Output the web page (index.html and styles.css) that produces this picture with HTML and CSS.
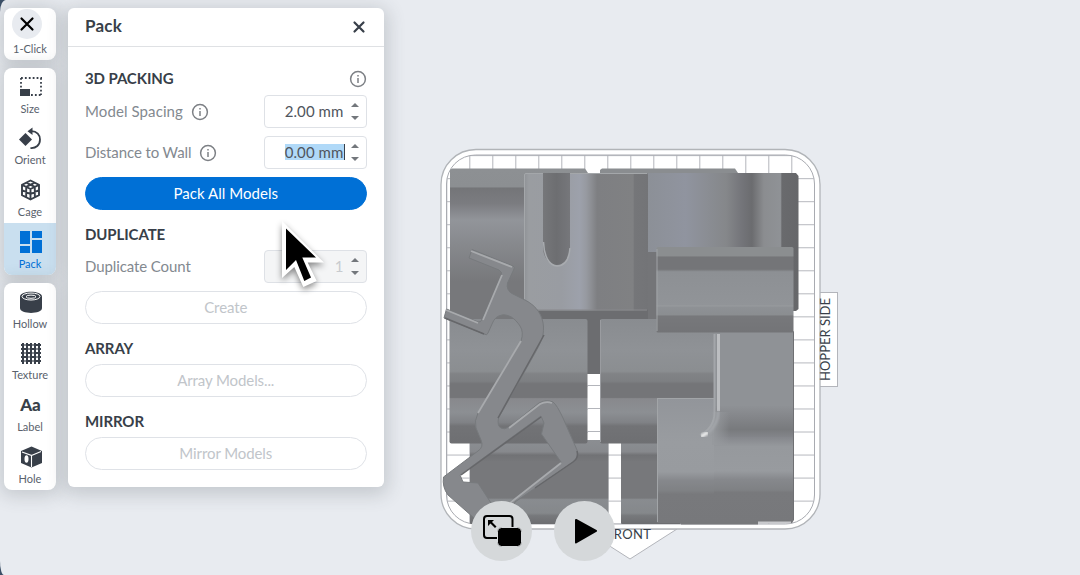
FILE: index.html
```html
<!DOCTYPE html>
<html lang="en">
<head>
    <meta charset="utf-8">
    <title>Pack</title>
    <link rel="stylesheet" href="styles.css">
</head>
<body>
<svg class="scene" width="1080" height="575" viewBox="0 0 1080 575">
    <defs>
        <pattern id="grid" x="446.3" y="178.2" width="23" height="23.03" patternUnits="userSpaceOnUse">
            <path d="M0 .5H23M.5 0V23.03" stroke="#b3b5bb" fill="none"/>
        </pattern>
        <linearGradient id="block" x2="0" y2="1">
            <stop offset="0" stop-color="#8d9093"/><stop offset=".12" stop-color="#8c8f92"/>
            <stop offset=".13" stop-color="#747578"/><stop offset=".23" stop-color="#7b7c80"/>
            <stop offset=".34" stop-color="#92959a"/><stop offset=".5" stop-color="#87898d"/>
            <stop offset=".75" stop-color="#77787b"/><stop offset="1" stop-color="#77787b"/>
        </linearGradient>
        <linearGradient id="mid" x2="0" y2="1">
            <stop offset="0" stop-color="#898c90"/><stop offset=".25" stop-color="#8f9296"/>
            <stop offset=".42" stop-color="#8b8e91"/><stop offset=".44" stop-color="#818386"/>
            <stop offset=".5" stop-color="#7d7f82"/><stop offset=".52" stop-color="#747578"/>
            <stop offset=".63" stop-color="#747578"/><stop offset=".64" stop-color="#88898d"/>
            <stop offset=".75" stop-color="#8c8f93"/><stop offset=".83" stop-color="#808286"/>
            <stop offset=".86" stop-color="#727376"/><stop offset="1" stop-color="#6e6f72"/>
        </linearGradient>
        <linearGradient id="low" x2="0" y2="1">
            <stop offset="0" stop-color="#8b8e92"/><stop offset=".14" stop-color="#87898d"/>
            <stop offset=".18" stop-color="#717275"/><stop offset=".26" stop-color="#77787b"/>
            <stop offset=".69" stop-color="#77787b"/><stop offset=".71" stop-color="#898c90"/>
            <stop offset=".87" stop-color="#85888b"/><stop offset=".9" stop-color="#77797c"/>
            <stop offset="1" stop-color="#6c6d70"/>
        </linearGradient>
        <linearGradient id="slotted">
            <stop offset="0" stop-color="#8f9296"/><stop offset=".04" stop-color="#9a9da1"/>
            <stop offset=".3" stop-color="#999ca2"/><stop offset=".45" stop-color="#9da1ab"/>
            <stop offset=".5" stop-color="#979aa1"/><stop offset=".54" stop-color="#8d8f94"/>
            <stop offset=".59" stop-color="#7e7f82"/><stop offset=".88" stop-color="#808183"/>
            <stop offset=".89" stop-color="#757679"/><stop offset="1" stop-color="#737477"/>
        </linearGradient>
        <linearGradient id="slot">
            <stop offset="0" stop-color="#76777a"/><stop offset=".5" stop-color="#6d6e71"/>
            <stop offset="1" stop-color="#76777b"/>
        </linearGradient>
        <linearGradient id="curved">
            <stop offset="0" stop-color="#8c9097"/><stop offset=".25" stop-color="#90949f"/>
            <stop offset=".4" stop-color="#8a8d93"/><stop offset=".52" stop-color="#85878a"/>
            <stop offset=".62" stop-color="#74757a"/><stop offset=".69" stop-color="#6b6c6f"/>
            <stop offset=".77" stop-color="#8b8d90"/><stop offset=".88" stop-color="#8f9296"/>
            <stop offset=".89" stop-color="#696a6d"/><stop offset="1" stop-color="#66676a"/>
        </linearGradient>
        <linearGradient id="bar" x2="0" y2="1">
            <stop offset="0" stop-color="#8b8e90"/><stop offset=".1" stop-color="#8b8e90"/>
            <stop offset=".12" stop-color="#747578"/><stop offset=".26" stop-color="#747578"/>
            <stop offset=".29" stop-color="#8d9094"/><stop offset=".68" stop-color="#919498"/>
            <stop offset=".69" stop-color="#9a9da0"/><stop offset=".7" stop-color="#8e9195"/>
            <stop offset=".79" stop-color="#8b8e91"/><stop offset=".81" stop-color="#77787b"/>
            <stop offset="1" stop-color="#737477"/>
        </linearGradient>
        <linearGradient id="upright" x2="0" y2="1">
            <stop offset="0" stop-color="#8f9296"/><stop offset=".7" stop-color="#8f9296"/>
            <stop offset=".8" stop-color="#85878b"/><stop offset=".93" stop-color="#787a7d"/>
            <stop offset="1" stop-color="#83858a"/>
        </linearGradient>
        <linearGradient id="base" x2="0" y2="1">
            <stop offset="0" stop-color="#83858a"/><stop offset=".12" stop-color="#96999d"/>
            <stop offset=".4" stop-color="#989b9f"/><stop offset=".5" stop-color="#86888c"/>
            <stop offset=".62" stop-color="#7f8184"/><stop offset=".65" stop-color="#78797c"/>
            <stop offset="1" stop-color="#77787b"/>
        </linearGradient>
        <linearGradient id="foot" x2="0" y2="1">
            <stop offset="0" stop-color="#92959a"/><stop offset=".35" stop-color="#999ca0"/>
            <stop offset=".59" stop-color="#989b9f"/><stop offset=".66" stop-color="#86888c"/>
            <stop offset=".74" stop-color="#7f8184"/><stop offset=".77" stop-color="#78797c"/>
            <stop offset="1" stop-color="#77787b"/>
        </linearGradient>
        <linearGradient id="fade">
            <stop offset="0" stop-color="#96999d"/><stop offset="1" stop-color="#96999d" stop-opacity="0"/>
        </linearGradient>
        <filter id="soft"><feGaussianBlur stdDeviation="1"/></filter>
    </defs>

    <!-- build plate -->
    <path d="M583 529H677L630 559Z" class="tag"/>
    <rect x="815" y="292.5" width="22.5" height="94" class="tag"/>
    <rect x="441" y="149.5" width="379" height="379.5" rx="35" class="rim"/>
    <rect x="446.5" y="155" width="368" height="369" rx="29" fill="url(#grid)" stroke="#a9abb1"/>
    <text x="606" y="539" class="side" textLength="45">FRONT</text>
    <text transform="translate(830 381) rotate(-90)" class="side" textLength="83">HOPPER SIDE</text>

    <!-- rear blocks -->
    <path d="M452 168.500H585L588 173V320H450V170Z" fill="url(#block)"/>
    <path d="M602 168.500H735L738 173V320H600V170Z" fill="#8a8d90"/>
    <path d="M524 309H657V320H600V374H587V320H524Z" fill="#6c6d70"/>
    <rect x="470" y="440" width="138.500" height="84" rx="1" fill="url(#low)"/>
    <rect x="621" y="440" width="60" height="84" rx="1" fill="url(#low)"/>
    <path d="M600 374V439H588V374Z" fill="#fff"/>
    <path d="M588 385.500H600M588 408.500H600M588 431.500H600" stroke="#b3b5bb"/>
    <rect x="449.500" y="319" width="138" height="124.500" rx="2" fill="url(#mid)"/>
    <rect x="600" y="319" width="122" height="124.500" rx="2" fill="url(#mid)"/>
    <path d="M600.500 320V442" stroke="#9a9ca0"/>

    <!-- slotted block and curved block -->
    <path d="M648 173H796L798.500 176V309L796 311H648Z" fill="url(#curved)"/>
    <rect x="648" y="252" width="12" height="67" fill="#747578"/>
    <rect x="524" y="173" width="124" height="137.500" rx="2" fill="url(#slotted)"/>
    <path d="M524.500 309V175Q524.500 173.500 526 173.500H647" fill="none" stroke="#a4a7aa"/>
    <path d="M525 310H647" stroke="#88898c"/>
    <path d="M543 173H570V247C570 258 564 265 557 265C549 265 543 257 543 247Z" fill="url(#slot)"/>
    <path d="M543.500 242C544 256 549 265.500 557 266C564 266 569 260 570 248" fill="none" stroke="#a8abaf" stroke-width="1.500"/>

    <!-- L block -->
    <rect x="657" y="398" width="60" height="125" fill="url(#foot)"/>
    <path d="M714 436H794V520L792 523H714Z" fill="url(#base)"/>
    <rect x="714" y="331" width="80" height="106" fill="url(#upright)"/>
    <rect x="712" y="412" width="18" height="33" fill="url(#fade)"/>
    <path d="M714.500 334V412Q714.500 428 700 435" fill="none" stroke="#a3a6aa" stroke-width="2"/>
    <path d="M718.500 334V411" stroke="#bcbec1" stroke-width="3"/>
    <path d="M718.500 411Q718 424 708 433" fill="none" stroke="#a3a6aa" stroke-width="3" filter="url(#soft)"/>
    <path d="M702 436L707 433" stroke="#eceded" stroke-width="3.500" stroke-linecap="round" filter="url(#soft)"/>
    <path d="M657.500 398V522M657 398.500H714" stroke="#a2a5a8"/>
    <path d="M793.500 332V520" stroke="#6f7073"/>
    <path d="M758 522.500H791" stroke="#c9cacd" stroke-width="2"/>
    <path d="M681 523.500H758" stroke="#77787b" stroke-width="2"/>
    <rect x="656.500" y="247" width="137" height="85.500" rx="1.500" fill="url(#bar)"/>
    <path d="M657 249V331" stroke="#a0a3a6"/>

    <!-- bracket -->
    <path class="bracket" fill-rule="evenodd" d="M472 249.500L513 266Q515 267 514 269L507.500 283Q506 290 512 293.500L525 300C537 306 543 316 543.500 327C544 337 540 344 535 353L498.500 418Q497 426 501 428Q504 430 509 427L539 403Q546 399 553 402Q557 405 563 418L577 450Q579 458 573 462L515 502L510 518H474L448 495Q442 487 443.500 477L478 451Q484 447 481 440L476 428Q474 421 478 413L521 341Q524 332 520 326C515 318 508 314 502 315Q495 316 492 324L488 333Q487 336 484 334L444 318L446.500 309L477 321.500Q481 323 482 319L501 276Q503 272 499 270L469 258ZM541 416L460 475L463 482L478 483L491 503H509L561 462L541.500 434L544 423Z"/>
    <path d="M471 251L512 267M446 310L478 323M483 320L502 275M509 428L540 404Q546 401 552 403M521 341L478 413M510 503L561 463" class="shine"/>
    <path d="M544 335L498 418M577 451Q579 458 573 462L535 488M541 417L461 475M484 334L445 318" class="shade"/>
</svg>

<div class="toolbar">
    <ul class="tools">
        <li class="tool one-click">
            <span class="dismiss"><svg width="16" height="16" viewBox="0 0 16 16"><path d="M2.500 2.500L13.500 13.500M13.500 2.500L2.500 13.500" stroke="#000" stroke-width="2.200" stroke-linecap="round"/></svg></span>
            1-Click
        </li>
    </ul>
    <ul class="tools">
        <li class="tool">
            <svg width="24" height="24" viewBox="0 0 24 24"><path d="M2 3H23M2 3V15M22 3V20M12 20H23" fill="none" stroke="#383f49" stroke-width="1.800" stroke-dasharray="1.800 2.100"/><path d="M1 14H11V21H1Z"/></svg>
            Size
        </li>
        <li class="tool">
            <svg width="24" height="24" viewBox="0 0 24 24"><path d="M6.500 7L13 13.500L6.500 20L0 13.500Z"/><path d="M12 5.200C18 5 21 9 21 13.500C21 19 17 22.500 11.500 22" fill="none" stroke="#383f49" stroke-width="1.800"/><path d="M8.500 5.200L13.500 1.500V9Z"/></svg>
            Orient
        </li>
        <li class="tool">
            <svg width="24" height="24" viewBox="0 0 24 24"><path d="M11.500 2.500L20 6.800V17.200L11.500 21.500L3 17.200V6.800ZM3 6.800L11.500 11L20 6.800M11.500 11V21.500M3 12L11.500 16.200L20 12M7.300 4.600L15.800 8.900V19.400M15.800 4.600L7.200 8.900V19.400" fill="none" stroke="#383f49" stroke-width="1.900" stroke-linejoin="round"/></svg>
            Cage
        </li>
        <li class="tool active">
            <svg width="24" height="24" viewBox="0 0 24 24"><path d="M1 1H11V14H1ZM13 1H23V8H13ZM1 16H11V23H1ZM13 10H23V23H13Z"/></svg>
            Pack
        </li>
    </ul>
    <ul class="tools">
        <li class="tool">
            <svg width="24" height="24" viewBox="0 0 24 24"><path d="M1 6.500C1 0 23 0 23 6.500V18C23 24.500 1 24.500 1 18Z"/><ellipse cx="12" cy="6.500" rx="9" ry="3.500" fill="none" stroke="#fff"/><ellipse cx="12" cy="6.700" rx="5" ry="1.600" fill="none" stroke="#fff"/></svg>
            Hollow
        </li>
        <li class="tool">
            <svg width="24" height="24" viewBox="0 0 24 24"><path d="M4 2V23M8 2V23M12 2V23M16 2V23M20 2V23M2 4H22M2 8H22M2 12H22M2 16H22M2 20H22" stroke="#383f49" stroke-width="2"/><path d="M6 3V5M14 3V5M10 7V9M18 7V9M6 11V13M14 11V13M10 15V17M18 15V17M6 19V21M14 19V21" stroke="#fff" stroke-width=".8"/></svg>
            Texture
        </li>
        <li class="tool">
            <span class="glyph">Aa</span>
            Label
        </li>
        <li class="tool">
            <svg width="24" height="24" viewBox="0 0 24 24"><path d="M12.500 1.500L23 6V18L12.500 22.500L2 18V6Z"/><path d="M3 7L12.500 10.500V22M12.500 10.500L22 6.500" fill="none" stroke="#fff" stroke-width="1.100"/><ellipse cx="7.500" cy="14" rx="2" ry="3.700" fill="#fff"/></svg>
            Hole
        </li>
    </ul>
</div>

<div class="panel">
    <div class="panel-header">
        <h1>Pack</h1>
        <svg class="close" width="14" height="14" viewBox="0 0 14 14"><path d="M2.500 2.500L11.500 11.500M11.500 2.500L2.500 11.500" stroke="#383f49" stroke-width="2.200" stroke-linecap="round"/></svg>
    </div>
    <div class="panel-body">
        <div class="row title-row">
            <h2>3D PACKING</h2>
            <svg class="info" width="18" height="18" viewBox="0 0 18 18"><circle cx="9" cy="9" r="7.400"/><path d="M9 8V13M9 5V6.500"/></svg>
        </div>
        <div class="row field">
            <label class="spacing">Model Spacing</label>
            <svg class="info" width="18" height="18" viewBox="0 0 18 18"><circle cx="9" cy="9" r="7.400"/><path d="M9 8V13M9 5V6.500"/></svg>
            <div class="number"><span class="value">2.00 mm</span><span class="spin"></span></div>
        </div>
        <div class="row field">
            <label>Distance to Wall</label>
            <svg class="info" width="18" height="18" viewBox="0 0 18 18"><circle cx="9" cy="9" r="7.400"/><path d="M9 8V13M9 5V6.500"/></svg>
            <div class="number"><span class="value selected">0.00 mm</span><span class="spin"></span></div>
        </div>
        <button class="btn primary">Pack All Models</button>
        <h2>DUPLICATE</h2>
        <div class="row field">
            <label>Duplicate Count</label>
            <div class="number disabled"><span class="value">1</span><span class="spin"></span></div>
        </div>
        <button class="btn">Create</button>
        <h2>ARRAY</h2>
        <button class="btn">Array Models...</button>
        <h2>MIRROR</h2>
        <button class="btn">Mirror Models</button>
    </div>
</div>

<div class="player">
    <span class="round">
        <svg width="40" height="34" viewBox="0 0 40 34"><rect x="2" y="2" width="28.500" height="22" rx="3" fill="none" stroke="#000" stroke-width="2"/><path d="M6 6H12L10 8L14.500 12.500L13 14L8.500 9.500L6 12Z"/><rect x="15.500" y="13.500" width="24" height="19" rx="4" stroke="#d5d8da"/></svg>
    </span>
    <span class="round">
        <svg width="40" height="34" viewBox="0 0 40 34"><path d="M11 6L31 17L11 28.500Z" stroke="#000" stroke-width="2" stroke-linejoin="round"/></svg>
    </span>
</div>

<svg class="cursor" width="50" height="72" viewBox="0 0 50 72"><path d="M3 1V58L15.300 47L24.300 67L37.700 61L28.700 42.500H45Z" fill="#fff"/><path d="M7 8.500V50L17 40L25.300 61L32 57.500L23.300 37.500H37Z"/></svg>
</body>
</html>
```

FILE: styles.css
```css
html {
    background: #3b4f66;
}

body {
    position: relative;
    display: flex;
    align-items: flex-start;
    gap: 12px;
    box-sizing: border-box;
    width: 1080px;
    height: 575px;
    margin: 0;
    padding: 8px 0 0 4px;
    overflow: hidden;
    background: #e8ebf0;
    border-radius: 6px 0 0 4px / 12px 0 0 14px;
    color: #383f49;
    font-family: Lato, "Liberation Sans", sans-serif;
    font-size: 15px;
}

.scene {
    position: absolute;
    top: 0;
    left: 0;
}

.tag {
    fill: #fff;
    stroke: #b3b5bb;
}

.rim {
    fill: #fff;
    stroke: #b1b4b8;
    stroke-width: 1.3;
}

.side {
    fill: #383f49;
    font-size: 13px;
}

.bracket {
    fill: #86888c;
    stroke: #777a7d;
}

.shine {
    fill: none;
    stroke: #a8aaad;
    stroke-width: 1.8;
}

.shade {
    fill: none;
    stroke: #66676a;
    stroke-width: 1.5;
}

.toolbar {
    position: relative;
    display: flex;
    flex-direction: column;
    gap: 8px;
    width: 52px;
}

.tools {
    margin: 0;
    padding: 0;
    list-style: none;
    background: #fff;
    border-radius: 8px;
    box-shadow: 0 2px 18px 4px rgba(60, 70, 75, .2);
}

.tool {
    display: flex;
    flex-direction: column;
    align-items: center;
    gap: 3px;
    box-sizing: border-box;
    height: 51.8px;
    padding-top: 7px;
    color: #59616c;
    font-size: 11px;
    line-height: 14px;
}

.tool svg {
    margin-left: 1px;
    fill: #383f49;
}

.tool.active {
    color: #0070d6;
    background: #c9dfef;
    border-radius: 0 0 8px 8px;
}

.tool.active svg {
    fill: #0070d6;
}

.one-click {
    height: 51.5px;
    padding-top: 1px;
}

.dismiss {
    display: flex;
    align-items: center;
    justify-content: center;
    width: 30px;
    height: 30px;
    margin-right: 6px;
    border-radius: 50%;
    background: #e8ebf0;
}

.dismiss svg {
    margin: 0;
}

.glyph {
    height: 24px;
    padding-left: 1px;
    color: #383f49;
    font-size: 17px;
    font-weight: 900;
    line-height: 23px;
}

.panel {
    position: relative;
    width: 316px;
    height: 479px;
    background: #fff;
    border-radius: 6px;
    box-shadow: 0 4px 18px 4px rgba(60, 70, 75, .2);
}

.panel-header {
    display: flex;
    align-items: center;
    justify-content: space-between;
    box-sizing: border-box;
    height: 39px;
    padding: 0 18px 1px 17px;
    border-bottom: 1px solid #dfe1e4;
}

h1 {
    margin: 0;
    padding-bottom: 2px;
    font-size: 17px;
    letter-spacing: .2px;
}

.panel-body {
    display: flex;
    flex-direction: column;
    padding: 22px 17.5px 0 17px;
}

h2 {
    margin: 0 0 6px;
    font-size: 15px;
    line-height: 20px;
    letter-spacing: -.1px;
}

.row {
    display: flex;
    align-items: center;
}

.title-row {
    justify-content: space-between;
    height: 20px;
    margin-bottom: 6px;
}

.title-row h2 {
    margin: 0;
    padding-bottom: 2px;
}

.field {
    height: 33px;
    margin-bottom: 8px;
    color: #838990;
    letter-spacing: -.1px;
}

.field label {
    padding-bottom: 2px;
}

.field .spacing {
    letter-spacing: .1px;
}

.field .info {
    margin-left: 8px;
}

.info {
    fill: none;
    stroke: #7d8085;
    stroke-width: 1.5;
}

.number {
    display: flex;
    align-items: center;
    justify-content: flex-end;
    gap: 7px;
    box-sizing: border-box;
    width: 103px;
    height: 33px;
    margin-left: auto;
    padding: 0 7px 1px 0;
    border: 1px solid #dee1e6;
    border-radius: 4px;
    color: #50555d;
    letter-spacing: .1px;
}

.value {
    line-height: 16px;
}

.selected {
    background: #b0d9f8;
    box-shadow: 1px 0 #383f49;
}

.spin {
    display: flex;
    flex-direction: column;
    gap: 9px;
}

.spin:before, .spin:after {
    content: "";
    border: 4px solid transparent;
    border-top: 0;
    border-bottom: 4px solid #73777c;
}

.spin:after {
    border-top: 4px solid #73777c;
    border-bottom: 0;
}

.number.disabled {
    background: #f4f5f6;
    color: #c8cbcf;
}

.btn {
    height: 33px;
    margin: 0 0 14px;
    padding: 0 0 2px;
    border: 1px solid #dfe2e7;
    border-radius: 17px;
    background: #fff;
    color: #c1c5ca;
    font: inherit;
    letter-spacing: -.1px;
}

.btn.primary {
    border-color: #0070d6;
    background: #0070d6;
    color: #fff;
    letter-spacing: .05px;
}

.player {
    position: absolute;
    top: 501px;
    left: 471px;
    display: flex;
    gap: 22px;
}

.round {
    display: flex;
    align-items: center;
    justify-content: center;
    width: 61px;
    height: 60px;
    border-radius: 50%;
    background: #d5d8da;
}

.cursor {
    position: absolute;
    top: 220px;
    left: 279px;
    filter: drop-shadow(0 3px 3px rgba(0, 0, 0, .45));
}
```
